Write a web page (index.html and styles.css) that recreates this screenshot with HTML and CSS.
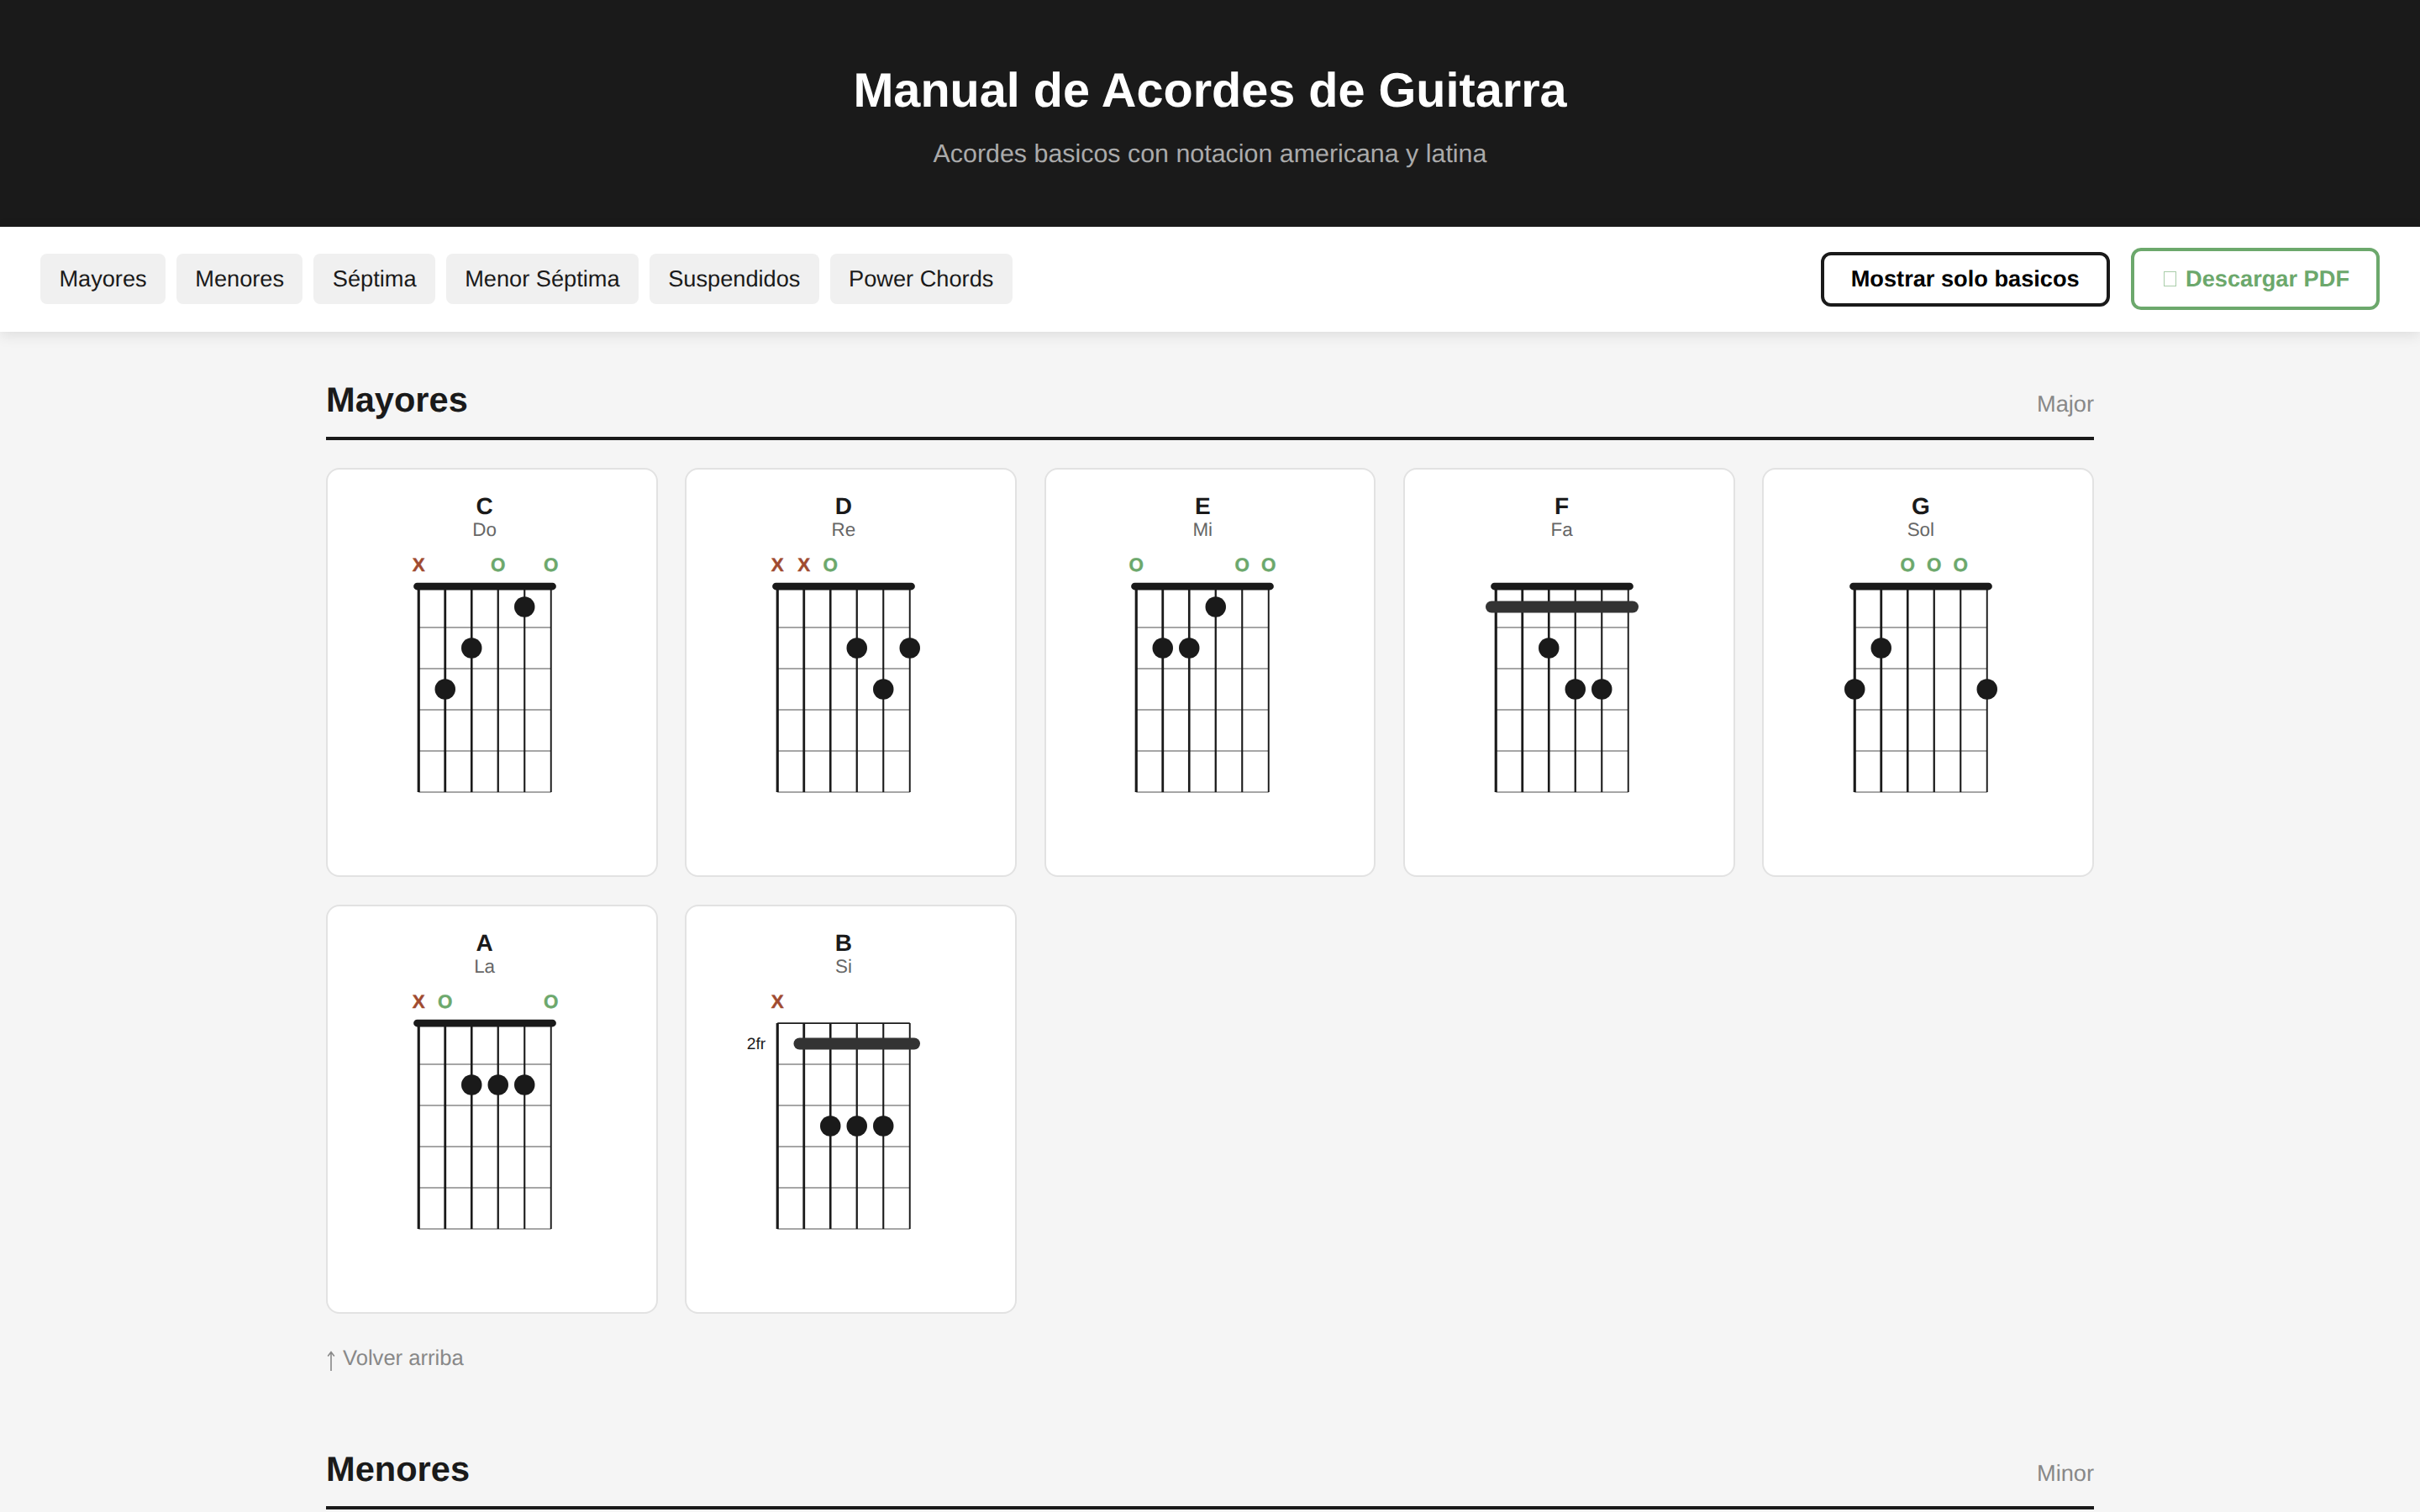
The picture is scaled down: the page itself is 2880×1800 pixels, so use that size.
FILE: index.html
```html
<!DOCTYPE html>
<html lang="es">
<head>
<meta charset="utf-8">
<title>Manual de Acordes de Guitarra</title>
<link rel="stylesheet" href="styles.css">
</head>
<body>
<svg class="defs" aria-hidden="true">
  <symbol id="strings" viewBox="0 0 120 170">
    <line class="fret" x1="15" y1="52" x2="105" y2="52"/>
    <line class="fret" x1="15" y1="80" x2="105" y2="80"/>
    <line class="fret" x1="15" y1="108" x2="105" y2="108"/>
    <line class="fret" x1="15" y1="136" x2="105" y2="136"/>
    <line class="fret" x1="15" y1="164" x2="105" y2="164"/>
    <line class="str s0" x1="15" y1="24" x2="15" y2="164"/>
    <line class="str s1" x1="33" y1="24" x2="33" y2="164"/>
    <line class="str s2" x1="51" y1="24" x2="51" y2="164"/>
    <line class="str s3" x1="69" y1="24" x2="69" y2="164"/>
    <line class="str s4" x1="87" y1="24" x2="87" y2="164"/>
    <line class="str s5" x1="105" y1="24" x2="105" y2="164"/>
  </symbol>
</svg>

<header class="hero">
  <h1 class="hero-title">Manual de Acordes de Guitarra</h1>
  <p class="hero-sub">Acordes basicos con notacion americana y latina</p>
</header>

<nav class="toolbar">
  <div class="pills">
    <a class="pill">Mayores</a>
    <a class="pill">Menores</a>
    <a class="pill">Séptima</a>
    <a class="pill">Menor Séptima</a>
    <a class="pill">Suspendidos</a>
    <a class="pill">Power Chords</a>
  </div>
  <div class="actions">
    <button class="btn btn-toggle">Mostrar solo basicos</button>
    <button class="btn btn-pdf"><span class="tofu"></span>Descargar PDF</button>
  </div>
</nav>

<main class="content">
  <section class="section">
    <div class="section-head">
      <h2 class="section-title">Mayores</h2>
      <span class="section-en">Major</span>
    </div>
    <div class="grid">

      <article class="card">
        <div class="name">C</div>
        <div class="latin">Do</div>
        <svg class="chord" viewBox="0 0 120 170">
          <use href="#strings"/>
          <rect class="nut" x="11.5" y="21.5" width="97" height="5" rx="2.5"/>
          <text class="mute" x="15" y="13.7">X</text>
          <text class="open" x="69" y="13.7">O</text>
          <text class="open" x="105" y="13.7">O</text>
          <circle class="dot" cx="87" cy="38" r="7"/>
          <circle class="dot" cx="51" cy="66" r="7"/>
          <circle class="dot" cx="33" cy="94" r="7"/>
        </svg>
      </article>

      <article class="card">
        <div class="name">D</div>
        <div class="latin">Re</div>
        <svg class="chord" viewBox="0 0 120 170">
          <use href="#strings"/>
          <rect class="nut" x="11.5" y="21.5" width="97" height="5" rx="2.5"/>
          <text class="mute" x="15" y="13.7">X</text>
          <text class="mute" x="33" y="13.7">X</text>
          <text class="open" x="51" y="13.7">O</text>
          <circle class="dot" cx="69" cy="66" r="7"/>
          <circle class="dot" cx="105" cy="66" r="7"/>
          <circle class="dot" cx="87" cy="94" r="7"/>
        </svg>
      </article>

      <article class="card">
        <div class="name">E</div>
        <div class="latin">Mi</div>
        <svg class="chord" viewBox="0 0 120 170">
          <use href="#strings"/>
          <rect class="nut" x="11.5" y="21.5" width="97" height="5" rx="2.5"/>
          <text class="open" x="15" y="13.7">O</text>
          <text class="open" x="87" y="13.7">O</text>
          <text class="open" x="105" y="13.7">O</text>
          <circle class="dot" cx="69" cy="38" r="7"/>
          <circle class="dot" cx="33" cy="66" r="7"/>
          <circle class="dot" cx="51" cy="66" r="7"/>
        </svg>
      </article>

      <article class="card">
        <div class="name">F</div>
        <div class="latin">Fa</div>
        <svg class="chord" viewBox="0 0 120 170">
          <use href="#strings"/>
          <rect class="nut" x="11.5" y="21.5" width="97" height="5" rx="2.5"/>
          <rect class="bar" x="8" y="34" width="104" height="8" rx="4"/>
          <circle class="dot" cx="51" cy="66" r="7"/>
          <circle class="dot" cx="69" cy="94" r="7"/>
          <circle class="dot" cx="87" cy="94" r="7"/>
        </svg>
      </article>

      <article class="card">
        <div class="name">G</div>
        <div class="latin">Sol</div>
        <svg class="chord" viewBox="0 0 120 170">
          <use href="#strings"/>
          <rect class="nut" x="11.5" y="21.5" width="97" height="5" rx="2.5"/>
          <text class="open" x="51" y="13.7">O</text>
          <text class="open" x="69" y="13.7">O</text>
          <text class="open" x="87" y="13.7">O</text>
          <circle class="dot" cx="33" cy="66" r="7"/>
          <circle class="dot" cx="15" cy="94" r="7"/>
          <circle class="dot" cx="105" cy="94" r="7"/>
        </svg>
      </article>

      <article class="card">
        <div class="name">A</div>
        <div class="latin">La</div>
        <svg class="chord" viewBox="0 0 120 170">
          <use href="#strings"/>
          <rect class="nut" x="11.5" y="21.5" width="97" height="5" rx="2.5"/>
          <text class="mute" x="15" y="13.7">X</text>
          <text class="open" x="33" y="13.7">O</text>
          <text class="open" x="105" y="13.7">O</text>
          <circle class="dot" cx="51" cy="66" r="7"/>
          <circle class="dot" cx="69" cy="66" r="7"/>
          <circle class="dot" cx="87" cy="66" r="7"/>
        </svg>
      </article>

      <article class="card">
        <div class="name">B</div>
        <div class="latin">Si</div>
        <svg class="chord" viewBox="0 0 120 170">
          <use href="#strings"/>
          <line class="topline" x1="15" y1="24" x2="105" y2="24"/>
          <text class="mute" x="15" y="13.7">X</text>
          <text class="fretnum" x="7" y="41.5">2fr</text>
          <rect class="bar" x="26" y="34" width="86" height="8" rx="4"/>
          <circle class="dot" cx="51" cy="94" r="7"/>
          <circle class="dot" cx="69" cy="94" r="7"/>
          <circle class="dot" cx="87" cy="94" r="7"/>
        </svg>
      </article>

    </div>
    <a class="back"><svg class="back-arrow" viewBox="0 0 12 24" aria-hidden="true"><path d="M6 24V1.5M2.2 6.5 6 1.5l3.8 5"/></svg>Volver arriba</a>
  </section>

  <section class="section">
    <div class="section-head">
      <h2 class="section-title">Menores</h2>
      <span class="section-en">Minor</span>
    </div>
  </section>
</main>
</body>
</html>
```

FILE: styles.css
```css
* { box-sizing: border-box; }

html, body {
  margin: 0;
  height: 100%;
  overflow: hidden;
}

body {
  background: #f5f5f5;
  color: #1a1a1a;
  font-family: "Liberation Sans", Arial, sans-serif;
  text-rendering: geometricPrecision;
}

.defs { display: none; }

/* Header */
.hero {
  height: 270px;
  padding-top: 74px;
  background: #1a1a1a;
  text-align: center;
}

.hero-title {
  margin: 0;
  color: #fff;
  font-size: 57.6px;
  font-weight: 700;
  line-height: 69px;
}

.hero-sub {
  margin: 23px 0 0;
  color: #aaa;
  font-size: 30.4px;
  line-height: 34px;
}

/* Toolbar */
.toolbar {
  position: relative;
  display: flex;
  align-items: center;
  justify-content: space-between;
  height: 125px;
  padding: 0 48px 1px;
  background: #fff;
  box-shadow: 0 4px 16px rgba(0, 0, 0, 0.1);
}

.pills {
  display: flex;
  gap: 12.9px;
}

.pill {
  padding: 14.4px 22.4px;
  border-radius: 8px;
  background: #f0f0f0;
  color: #1a1a1a;
  font-size: 27.2px;
  line-height: 31.2px;
}

.actions {
  display: flex;
  align-items: center;
  gap: 25.4px;
}

.btn {
  display: flex;
  align-items: center;
  padding: 0 32px;
  background: #fff;
  border-style: solid;
  border-width: 4px;
  border-radius: 12px;
  font-family: inherit;
  font-size: 27.2px;
  font-weight: 700;
  text-rendering: geometricPrecision;
}

.btn-toggle {
  height: 65px;
  border-color: #1a1a1a;
  color: #000;
}

.btn-pdf {
  height: 74.5px;
  border-color: #6ca86c;
  color: #6ca86c;
}

.tofu {
  width: 15px;
  height: 18px;
  margin: 0 11px 0 3px;
  border: 1.5px solid #a9cda9;
}

/* Content */
.content {
  width: 2104px;
  margin: 0 auto;
  padding-top: 56px;
}

.section-head {
  display: flex;
  align-items: baseline;
  justify-content: space-between;
  padding-bottom: 19px;
  border-bottom: 4px solid #1a1a1a;
}

.section-title {
  margin: 0;
  color: #1a1a1a;
  font-size: 41.6px;
  font-weight: 700;
  line-height: 49.7px;
}

.section-en {
  color: #888;
  font-size: 27.2px;
}

.grid {
  display: grid;
  grid-template-columns: repeat(5, 1fr);
  gap: 33px 32.6px;
  margin-top: 33px;
}

.card {
  display: flex;
  flex-direction: column;
  align-items: center;
  height: 487px;
  padding: 28px 41.5px 0 24px;
  background: #fff;
  border: 2px solid #e2e2e2;
  border-radius: 16px;
}

.name {
  color: #1a1a1a;
  font-size: 28px;
  font-weight: 700;
  line-height: 32px;
}

.latin {
  margin-top: -1px;
  color: #666;
  font-size: 22.4px;
  line-height: 26px;
}

.chord {
  display: block;
  flex: none;
  width: 210px;
  height: 297.5px;
  margin-top: 12.5px;
  overflow: visible;
}

/* Chord diagram */
.fret {
  stroke: #888;
  stroke-width: 0.9;
}

.str { stroke: #1a1a1a; }
.s0 { stroke-width: 1.8; }
.s1 { stroke-width: 1.6; }
.s2 { stroke-width: 1.5; }
.s3 { stroke-width: 1.3; }
.s4 { stroke-width: 1.2; }
.s5 { stroke-width: 1.1; }

.nut { fill: #1a1a1a; }
.dot { fill: #1a1a1a; }
.bar { fill: #333; }

.topline {
  stroke: #1a1a1a;
  stroke-width: 1;
}

.mute, .open {
  font-size: 12.8px;
  font-weight: 700;
  text-anchor: middle;
  stroke-width: 0.25;
}

.mute { fill: #a04a2f; stroke: #a04a2f; }
.open { fill: #6ca86c; stroke: #6ca86c; }

.fretnum {
  fill: #1a1a1a;
  font-size: 11px;
  text-anchor: end;
}

.back {
  display: flex;
  align-items: flex-start;
  margin: 38.8px 0 92px;
  color: #888;
  font-size: 25.6px;
  line-height: 29.4px;
}

.back-arrow {
  flex: none;
  width: 12px;
  height: 24px;
  margin: 5.5px 8px 0 0;
  fill: none;
  stroke: #888;
  stroke-width: 1.6;
}
```
